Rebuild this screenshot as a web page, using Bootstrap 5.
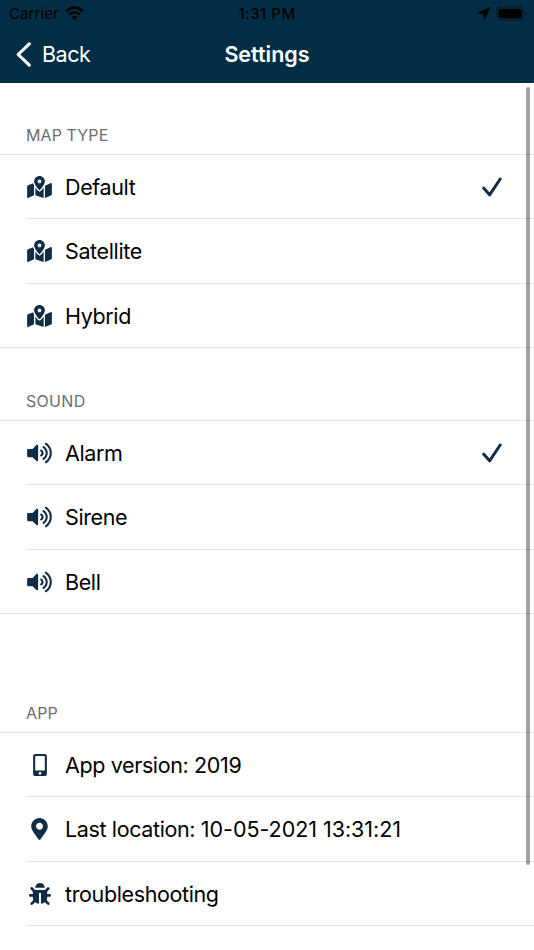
<!DOCTYPE html>
<html lang="en">
<head>
<meta charset="utf-8">
<meta name="viewport" content="width=device-width, initial-scale=1">
<title>Settings</title>
<link href="https://cdn.jsdelivr.net/npm/bootstrap@5.3.0/dist/css/bootstrap.min.css" rel="stylesheet">
<style>
body{font-family:Inter,"Liberation Sans",sans-serif;color:#000;height:950px;overflow:hidden;background:#fff}
.topbar{background:#042e46;height:83px}
.status{height:27px;font-size:15px;color:#000;line-height:27px}
.status-side{width:178px}
.carrier{padding-left:9px;gap:6px;letter-spacing:.1px}
.indicators{padding-right:6px;gap:5px}
.clock{font-weight:500;font-size:15px;letter-spacing:.5px}
.titlebar{height:54px;font-size:21.5px;line-height:54px;color:#fff}
.back{padding-left:16px;gap:11px;letter-spacing:-.5px}
.page-title{font-weight:600;letter-spacing:0}
.section-label{padding-left:26px;font-size:16px;color:#6d6d72;line-height:20px;letter-spacing:.1px}
.first-label{padding-top:42px;height:71px}
.sound-label{padding-top:43px;height:72.4px;letter-spacing:.3px}
.app-label{padding-top:89px;height:118.4px}
.settings{border-top:1px solid #e1e1e3;border-bottom:1px solid #e1e1e3;padding-left:26px}
.settings.open-end{border-bottom:0}
.setting{height:64.4px;font-size:21.5px;letter-spacing:-.37px;border-bottom:1px solid #e1e1e3}
.settings:not(.open-end) .setting:last-child{border-bottom:0;height:62.8px;padding-top:1.4px}
.open-end .setting:last-child{padding-top:1px}
.glyph{width:27.6px;margin-right:11.4px;color:#112d45}
.tick{margin-right:32px;color:#112d45}
.stamp{letter-spacing:-.04px}
.scroll-thumb{position:absolute;right:4px;top:87px;width:4px;height:778px;border-radius:2px;background:rgba(0,0,0,.36)}
</style>
<script src="https://cdn.jsdelivr.net/npm/bootstrap@5.3.0/dist/js/bootstrap.bundle.min.js"></script>
</head>
<body class="position-relative">
<svg class="d-none" xmlns="http://www.w3.org/2000/svg">
<symbol id="map" viewBox="0 0 576 512"><path fill="currentColor" d="M288 0c-69.59 0-126 56.41-126 126 0 56.26 82.35 158.8 113.9 196.02 6.39 7.54 17.82 7.54 24.2 0C331.65 284.8 414 182.26 414 126 414 56.41 357.59 0 288 0zm0 168c-23.2 0-42-18.8-42-42s18.8-42 42-42 42 18.8 42 42-18.8 42-42 42zM20.12 215.95A32.006 32.006 0 0 0 0 245.66v250.32c0 11.32 11.43 19.06 21.94 14.86L160 448V214.92c-8.84-15.98-16.07-31.54-21.25-46.42L20.12 215.95zM288 359.67c-14.07 0-27.38-6.18-36.51-16.96-19.66-23.2-40.57-49.62-59.49-76.72v182l192 64V266c-18.92 27.09-39.82 53.52-59.49 76.72-9.13 10.77-22.44 16.95-36.51 16.95zm266.06-198.51L416 224v288l139.88-55.95A31.996 31.996 0 0 0 576 426.34V176.02c0-11.32-11.43-19.06-21.94-14.86z"/></symbol>
<symbol id="volume" viewBox="0 0 576 512"><path fill="currentColor" d="M215.03 71.05L126.06 160H24c-13.26 0-24 10.74-24 24v144c0 13.25 10.74 24 24 24h102.06l88.97 88.95c15.03 15.03 40.97 4.47 40.97-16.97V88.02c0-21.46-25.96-31.98-40.97-16.97zm233.32-51.08c-11.17-7.33-26.18-4.24-33.51 6.95-7.34 11.17-4.22 26.18 6.95 33.51 66.27 43.49 105.82 116.6 105.82 195.58 0 78.98-39.55 152.09-105.82 195.58-11.17 7.32-14.29 22.34-6.95 33.5 7.04 10.71 21.93 14.56 33.51 6.95C528.27 439.58 576 351.33 576 256S528.27 72.43 448.35 19.97zM480 256c0-63.53-32.06-121.94-85.77-156.24-11.19-7.14-26.03-3.82-33.12 7.46s-3.78 26.21 7.41 33.36C408.27 165.97 432 209.11 432 256s-23.73 90.02-63.48 115.42c-11.19 7.14-14.5 22.07-7.41 33.36 6.51 10.36 21.12 15.14 33.12 7.46C447.94 377.94 480 319.54 480 256zm-141.77-76.87c-11.58-6.33-26.19-2.16-32.61 9.45-6.39 11.61-2.16 26.2 9.45 32.61C327.98 228.28 336 241.63 336 256c0 14.38-8.02 27.72-20.92 34.81-11.61 6.41-15.84 21-9.45 32.61 6.43 11.66 21.05 15.8 32.61 9.45 28.23-15.55 45.77-45 45.77-76.88s-17.54-61.32-45.78-76.86z"/></symbol>
<symbol id="phone" viewBox="0 0 320 512"><path fill="currentColor" d="M272 0H48C21.5 0 0 21.5 0 48v416c0 26.5 21.5 48 48 48h224c26.5 0 48-21.5 48-48V48c0-26.5-21.5-48-48-48zM160 480c-17.7 0-32-14.3-32-32s14.3-32 32-32 32 14.3 32 32-14.3 32-32 32zm112-108c0 6.6-5.4 12-12 12H60c-6.6 0-12-5.4-12-12V60c0-6.6 5.4-12 12-12h200c6.6 0 12 5.4 12 12v312z"/></symbol>
<symbol id="pin" viewBox="0 0 384 512"><path fill="currentColor" d="M172.268 501.67C26.97 291.031 0 269.413 0 192 0 85.961 85.961 0 192 0s192 85.961 192 192c0 77.413-26.97 99.031-172.268 309.67-9.535 13.774-29.93 13.773-39.464 0zM192 272c44.183 0 80-35.817 80-80s-35.817-80-80-80-80 35.817-80 80 35.817 80 80 80z"/></symbol>
<symbol id="bug" viewBox="0 0 512 512"><path fill="currentColor" d="M511.988 288.9c-.478 17.43-15.217 31.1-32.653 31.1H424v16c0 21.864-4.882 42.584-13.6 61.145l60.228 60.228c12.496 12.497 12.496 32.758 0 45.255-12.498 12.497-32.759 12.496-45.256 0l-54.736-54.736C345.886 467.965 314.351 480 280 480V236c0-6.627-5.373-12-12-12h-24c-6.627 0-12 5.373-12 12v244c-34.351 0-65.886-12.035-90.636-32.108l-54.736 54.736c-12.498 12.497-32.759 12.496-45.256 0-12.496-12.497-12.496-32.758 0-45.255l60.228-60.228C92.882 378.584 88 357.864 88 336v-16H32.666C15.23 320 .491 306.33.013 288.9-.484 270.816 14.028 256 32 256h56v-58.745l-46.628-46.628c-12.496-12.497-12.496-32.758 0-45.255 12.498-12.497 32.758-12.497 45.256 0L141.255 160h229.489l54.627-54.627c12.498-12.497 32.758-12.497 45.256 0 12.496 12.497 12.496 32.758 0 45.255L424 197.255V256h56c17.972 0 32.484 14.816 31.988 32.9zM257 0c-61.856 0-112 50.144-112 112h224C369 50.144 318.856 0 257 0z"/></symbol>
<symbol id="tick" viewBox="0 0 20 20"><path fill="none" stroke="currentColor" stroke-width="3" stroke-linecap="round" stroke-linejoin="round" d="M1.8 11.2 7.6 17.8 18.2 2"/></symbol>
</svg>

<header class="topbar">
  <div class="status d-flex justify-content-between">
    <div class="status-side carrier d-flex align-items-center"><span>Carrier</span>
      <svg width="19" height="15" viewBox="0 0 19 15"><g fill="none" stroke="#000" stroke-width="2.5"><path d="M.9 5.5Q9.5-2.4 18.1 5.5M4 8.7Q9.5 3.7 15 8.7"/></g><path d="M6.5 11Q9.5 8.6 12.5 11L9.5 14z"/></svg>
    </div>
    <div class="clock">1:31 PM</div>
    <div class="status-side indicators d-flex justify-content-end align-items-center">
      <svg width="14" height="13" viewBox="0 0 14 13"><path d="M13.3.3 7.4 12.5 6.3 7 .5 6z" stroke="#000" stroke-width=".5" stroke-linejoin="round"/></svg>
      <svg width="32" height="15" viewBox="0 0 32 15"><rect x=".8" y=".8" width="27" height="13.4" rx="4" fill="none" stroke="#021c2b" stroke-width="1.2"/><rect x="2.5" y="2.8" width="23.6" height="9.4" rx="2"/><path d="M29.5 5.2q3 2.3 0 4.6z" fill="#021c2b"/></svg>
    </div>
  </div>
  <div class="titlebar d-flex justify-content-between">
    <div class="status-side back d-flex align-items-center"><svg width="15" height="25" viewBox="0 0 15 25"><path d="M13.3 1.9 2.2 12.5 13.3 23.1" fill="none" stroke="#fff" stroke-width="3.1" stroke-linecap="round" stroke-linejoin="round"/></svg><span>Back</span></div>
    <div class="page-title">Settings</div>
    <div class="status-side"></div>
  </div>
</header>

<main>
  <div class="section-label first-label">MAP TYPE</div>
  <div class="settings">
    <div class="setting d-flex align-items-center"><span class="glyph d-flex justify-content-center"><svg width="25" height="22"><use href="#map"/></svg></span><span>Default</span><svg class="tick ms-auto" width="20" height="20"><use href="#tick"/></svg></div>
    <div class="setting d-flex align-items-center"><span class="glyph d-flex justify-content-center"><svg width="25" height="22"><use href="#map"/></svg></span><span>Satellite</span></div>
    <div class="setting d-flex align-items-center"><span class="glyph d-flex justify-content-center"><svg width="25" height="22"><use href="#map"/></svg></span><span>Hybrid</span></div>
  </div>
  <div class="section-label sound-label">SOUND</div>
  <div class="settings">
    <div class="setting d-flex align-items-center"><span class="glyph d-flex justify-content-center"><svg width="25" height="22"><use href="#volume"/></svg></span><span>Alarm</span><svg class="tick ms-auto" width="20" height="20"><use href="#tick"/></svg></div>
    <div class="setting d-flex align-items-center"><span class="glyph d-flex justify-content-center"><svg width="25" height="22"><use href="#volume"/></svg></span><span>Sirene</span></div>
    <div class="setting d-flex align-items-center"><span class="glyph d-flex justify-content-center"><svg width="25" height="22"><use href="#volume"/></svg></span><span>Bell</span></div>
  </div>
  <div class="section-label app-label">APP</div>
  <div class="settings open-end">
    <div class="setting d-flex align-items-center"><span class="glyph d-flex justify-content-center"><svg width="14" height="22"><use href="#phone"/></svg></span><span>App version: 2019</span></div>
    <div class="setting d-flex align-items-center"><span class="glyph d-flex justify-content-center"><svg width="17" height="22"><use href="#pin"/></svg></span><span>Last location: <span class="stamp">10-05-2021 13:31:21</span></span></div>
    <div class="setting d-flex align-items-center"><span class="glyph d-flex justify-content-center"><svg width="22" height="22"><use href="#bug"/></svg></span><span>troubleshooting</span></div>
  </div>
</main>
<div class="scroll-thumb"></div>
</body>
</html>
